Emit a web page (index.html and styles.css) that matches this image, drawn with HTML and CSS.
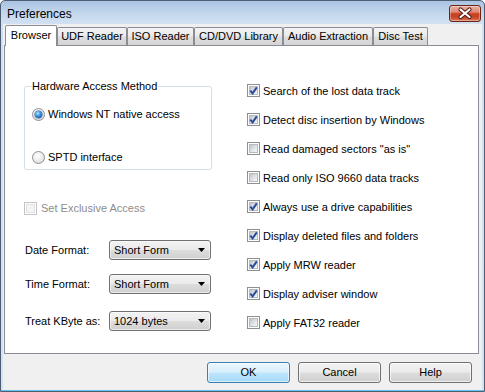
FILE: index.html
```html
<!DOCTYPE html>
<html>
<head>
<meta charset="utf-8">
<link rel="stylesheet" href="styles.css">
</head>
<body>
<div class="window">
  <div class="titlebar">
    <span class="title">Preferences</span>
    <div class="close">
      <svg width="30" height="15" viewBox="0 0 30 15">
        <path d="M10.5 3.5 L19.5 11 M19.5 3.5 L10.5 11" stroke="#4a1710" stroke-width="4.2" stroke-linecap="round"/>
        <path d="M10.5 3.5 L19.5 11 M19.5 3.5 L10.5 11" stroke="#ffffff" stroke-width="2.2" stroke-linecap="round"/>
      </svg>
    </div>
  </div>
  <div class="client">
    <div class="tabs">
      <div class="tab sel t-browser">Browser</div>
      <div class="tab t-udf">UDF Reader</div>
      <div class="tab t-iso">ISO Reader</div>
      <div class="tab t-cd">CD/DVD Library</div>
      <div class="tab t-audio">Audio Extraction</div>
      <div class="tab t-disc">Disc Test</div>
    </div>
    <div class="panel">
      <div class="col-left">
        <fieldset class="group">
          <legend>Hardware Access Method</legend>
          <div class="opt"><span class="radio on"><span class="dot"></span></span><span>Windows NT native access</span></div>
          <div class="opt opt2"><span class="radio"></span><span>SPTD interface</span></div>
        </fieldset>
        <div class="opt excl disabled"><span class="cb dis"><span class="cb-in"></span></span><span>Set Exclusive Access</span></div>
        <div class="field f-date"><span class="lbl">Date Format:</span><div class="combo"><span>Short Form</span><svg width="7" height="4" viewBox="0 0 7 4"><path d="M0 0 H7 L3.5 4 Z" fill="#000"/></svg></div></div>
        <div class="field f-time"><span class="lbl">Time Format:</span><div class="combo"><span>Short Form</span><svg width="7" height="4" viewBox="0 0 7 4"><path d="M0 0 H7 L3.5 4 Z" fill="#000"/></svg></div></div>
        <div class="field f-kb"><span class="lbl">Treat KByte as:</span><div class="combo"><span>1024 bytes</span><svg width="7" height="4" viewBox="0 0 7 4"><path d="M0 0 H7 L3.5 4 Z" fill="#000"/></svg></div></div>
      </div>
      <div class="col-right">
        <div class="row"><span class="cb"><span class="cb-in"><svg class="chk" width="13" height="13" viewBox="0 0 13 13"><path d="M3.3 6.6 L5.6 9.3 L9.8 3.4" fill="none" stroke="#2a4a9e" stroke-width="2"/></svg></span></span><span>Search of the lost data track</span></div>
        <div class="row"><span class="cb"><span class="cb-in"><svg class="chk" width="13" height="13" viewBox="0 0 13 13"><path d="M3.3 6.6 L5.6 9.3 L9.8 3.4" fill="none" stroke="#2a4a9e" stroke-width="2"/></svg></span></span><span>Detect disc insertion by Windows</span></div>
        <div class="row"><span class="cb"><span class="cb-in"></span></span><span>Read damaged sectors "as is"</span></div>
        <div class="row"><span class="cb"><span class="cb-in"></span></span><span>Read only ISO 9660 data tracks</span></div>
        <div class="row"><span class="cb"><span class="cb-in"><svg class="chk" width="13" height="13" viewBox="0 0 13 13"><path d="M3.3 6.6 L5.6 9.3 L9.8 3.4" fill="none" stroke="#2a4a9e" stroke-width="2"/></svg></span></span><span>Always use a drive capabilities</span></div>
        <div class="row"><span class="cb"><span class="cb-in"><svg class="chk" width="13" height="13" viewBox="0 0 13 13"><path d="M3.3 6.6 L5.6 9.3 L9.8 3.4" fill="none" stroke="#2a4a9e" stroke-width="2"/></svg></span></span><span>Display deleted files and folders</span></div>
        <div class="row"><span class="cb"><span class="cb-in"><svg class="chk" width="13" height="13" viewBox="0 0 13 13"><path d="M3.3 6.6 L5.6 9.3 L9.8 3.4" fill="none" stroke="#2a4a9e" stroke-width="2"/></svg></span></span><span>Apply MRW reader</span></div>
        <div class="row"><span class="cb"><span class="cb-in"><svg class="chk" width="13" height="13" viewBox="0 0 13 13"><path d="M3.3 6.6 L5.6 9.3 L9.8 3.4" fill="none" stroke="#2a4a9e" stroke-width="2"/></svg></span></span><span>Display adviser window</span></div>
        <div class="row"><span class="cb"><span class="cb-in"></span></span><span>Apply FAT32 reader</span></div>
      </div>
    </div>
    <div class="footer">
      <div class="btn default">OK</div>
      <div class="btn">Cancel</div>
      <div class="btn">Help</div>
    </div>
  </div>
</div>
</body>
</html>
```
FILE: styles.css
```css
html, body {
  margin: 0;
  padding: 0;
}
body {
  font-family: "Liberation Sans", Arial, sans-serif;
  font-size: 11px;
  color: #000;
  background: #fff;
}
.window {
  width: 485px;
  height: 392px;
  box-sizing: border-box;
  border: 1px solid #4d5e72;
  border-radius: 5px 5px 0 0;
  background: linear-gradient(to bottom, #a9c3e1 0px, #c3d7ed 12px, #d2e1f2 23px, #d4e2f2 100%);
  box-shadow: inset 0 -1px 0 #5cc6ee;
  padding: 0 2px 1px 2px;
  display: flex;
  flex-direction: column;
}
.titlebar {
  height: 23px;
  flex: none;
  display: flex;
  justify-content: space-between;
  align-items: flex-start;
  padding: 0 1px 0 4px;
  box-sizing: border-box;
}
.title {
  font-size: 12px;
  line-height: 16px;
  margin-top: 5px;
  color: #000;
}
.close {
  margin-top: 4px;
  width: 32px;
  height: 17px;
  box-sizing: border-box;
  border: 1px solid #6a2418;
  border-radius: 3px;
  background: linear-gradient(to bottom, #eab0a2 0%, #de8a76 40%, #c9401f 52%, #c84527 75%, #dc7a5c 100%);
  box-shadow: inset 0 0 0 1px rgba(255, 255, 255, 0.35);
  display: flex;
  align-items: center;
  justify-content: center;
}
.close svg {
  display: block;
}
.client {
  flex: 1;
  background: #f0f0f0;
  display: flex;
  flex-direction: column;
}
.tabs {
  height: 20px;
  margin-top: 1px;
  margin-left: 2px;
  display: flex;
  align-items: flex-end;
  flex: none;
}
.tab {
  box-sizing: border-box;
  height: 18px;
  border: 1px solid #898c95;
  border-bottom: none;
  border-radius: 2px 2px 0 0;
  background: linear-gradient(to bottom, #f3f3f3 0%, #ebebeb 45%, #dddddd 55%, #d4d4d4 100%);
  text-align: center;
  line-height: 17px;
  white-space: nowrap;
}
.tab.sel {
  height: 21px;
  margin-bottom: -1px;
  background: #fff;
  position: relative;
  z-index: 1;
  line-height: 18px;
}
.t-browser { width: 52px; }
.t-udf { width: 70px; }
.t-iso { width: 67px; }
.t-cd { width: 89px; }
.t-audio { width: 90px; }
.t-disc { width: 55px; }

.panel {
  height: 309px;
  flex: none;
  box-sizing: border-box;
  margin: 0 3px 0 1px;
  border: 1px solid #898c95;
  background: #fff;
  padding: 30px 0 0 19px;
  display: grid;
  grid-template-columns: 223px 1fr;
  align-items: start;
}
.col-left {
  display: flex;
  flex-direction: column;
}
.group {
  margin: 4px 0 0 0;
  width: 188px;
  height: 90px;
  box-sizing: border-box;
  border: 1px solid #d5dfe5;
  border-radius: 3px;
  padding: 13px 0 0 7px;
}
.group legend {
  padding: 0 1px 0 0;
  margin-left: 0;
  line-height: 13px;
  font-size: 11px;
}
.opt {
  display: flex;
  align-items: center;
  height: 16px;
  gap: 3px;
  white-space: nowrap;
}
.opt2 {
  margin-top: 27px;
}
.excl {
  margin-top: 30px;
  gap: 4px;
}
.disabled {
  color: #8d8d8d;
}
.radio {
  width: 13px;
  height: 13px;
  box-sizing: border-box;
  border-radius: 50%;
  border: 1px solid #8c8f94;
  background: radial-gradient(circle at 40% 35%, #ffffff 0%, #f2f2f2 35%, #d2d4d6 100%);
  display: flex;
  align-items: center;
  justify-content: center;
  flex: none;
}
.dot {
  width: 7px;
  height: 7px;
  border-radius: 50%;
  background: radial-gradient(circle at 40% 35%, #b8ecff 0%, #47a4e8 35%, #1755b8 75%, #0d3a8a 100%);
  box-shadow: 0 0 0 0.5px #2a4f8a;
}
.cb {
  width: 13px;
  height: 13px;
  box-sizing: border-box;
  border: 1px solid #8e8f8f;
  background: #fff;
  display: flex;
  align-items: center;
  justify-content: center;
  flex: none;
}
.cb-in {
  width: 9px;
  height: 9px;
  box-sizing: border-box;
  border: 1px solid #b6bbc0;
  background: linear-gradient(135deg, #c0c4c9 0%, #e4e6e8 60%, #f6f6f6 100%);
  display: flex;
  align-items: center;
  justify-content: center;
}
.cb.dis {
  border-color: #c4c4c4;
}
.cb.dis .cb-in {
  border-color: #e2e2e2;
  background: #f4f4f4;
}
.chk {
  flex: none;
  margin: -2px;
  display: block;
}
.field {
  display: flex;
  align-items: center;
  height: 20px;
}
.f-date { margin-top: 24px; }
.f-time { margin-top: 14px; }
.f-kb { margin-top: 17px; }
.lbl {
  width: 84px;
  margin-left: 1px;
  white-space: nowrap;
}
.combo {
  width: 102px;
  height: 20px;
  box-sizing: border-box;
  border: 1px solid #707070;
  border-radius: 3px;
  background: linear-gradient(to bottom, #f2f2f2 0%, #ebebeb 48%, #dddddd 52%, #cfcfcf 100%);
  box-shadow: inset 0 0 0 1px rgba(255, 255, 255, 0.6);
  display: flex;
  align-items: center;
  justify-content: space-between;
  padding: 0 4px 0 4px;
}
.combo svg {
  display: block;
  margin-right: 1px;
}
.col-right {
  display: flex;
  flex-direction: column;
}
.row {
  height: 29px;
  display: flex;
  align-items: center;
  gap: 3px;
  white-space: nowrap;
}
.footer {
  flex: 1;
  display: flex;
  justify-content: flex-end;
  align-items: flex-start;
  padding: 8px 10px 0 0;
  gap: 8px;
}
.btn {
  width: 83px;
  height: 21px;
  box-sizing: border-box;
  border: 1px solid #707070;
  border-radius: 3px;
  background: linear-gradient(to bottom, #f2f2f2 0%, #ebebeb 48%, #dddddd 52%, #cfcfcf 100%);
  box-shadow: inset 0 0 0 1px rgba(255, 255, 255, 0.7);
  text-align: center;
  line-height: 19px;
}
.btn.default {
  border-color: #3c7fb1;
  background: linear-gradient(to bottom, #eaf6fd 0%, #d9f0fc 48%, #bee6fd 52%, #a7d9f5 100%);
  box-shadow: inset 0 0 0 1px rgba(255, 255, 255, 0.6);
}
```
